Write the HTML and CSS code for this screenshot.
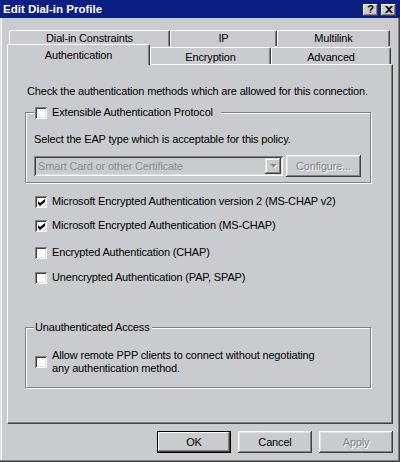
FILE: index.html
```html
<!DOCTYPE html>
<html>
<head>
<meta charset="utf-8">
<link rel="stylesheet" href="styles.css">
</head>
<body>
<div class="window">
  <div class="titlebar">
    <span class="title">Edit Dial-in Profile</span>
    <div class="caption-btns">
      <span class="cbtn help">?</span>
      <span class="cbtn close"><svg width="8" height="7" viewBox="0 0 8 7"><path d="M0 0h2l2 2 2-2h2L5 3.5 8 7H6L4 5 2 7H0l3-3.5z" fill="#000"/></svg></span>
    </div>
  </div>
  <div class="client">
    <div class="tabs">
      <div class="tabrow back">
        <div class="tab t-dial">Dial-in Constraints</div>
        <div class="tab t-ip">IP</div>
        <div class="tab t-multi">Multilink</div>
      </div>
      <div class="tabrow front">
        <div class="tab selected t-auth">Authentication</div>
        <div class="tab t-enc">Encryption</div>
        <div class="tab t-adv">Advanced</div>
      </div>
    </div>
    <div class="panel">
      <p class="intro">Check the authentication methods which are allowed for this connection.</p>
      <fieldset class="group eap">
        <legend class="eap-legend"><span class="check"><span class="box"></span><span>Extensible Authentication Protocol</span></span></legend>
        <p class="eap-text">Select the EAP type which is acceptable for this policy.</p>
        <div class="eap-row">
          <div class="combo"><span class="combo-text">Smart Card or other Certificate</span><span class="combo-btn"><svg width="9" height="6" viewBox="0 0 9 6"><path d="M2 2h7L5.5 5.5z" fill="#fff"/><path d="M1 1h7L4.5 4.5z" fill="#808080"/></svg></span></div>
          <button class="btn disabled configure">Configure...</button>
        </div>
      </fieldset>
      <div class="methods">
        <div class="check row"><span class="box"><svg class="tick" width="7" height="7" viewBox="0 0 7 7"><path d="M0 2L2 4L7 0V3L2 7L0 5Z" fill="#000"/></svg></span><span>Microsoft Encrypted Authentication version 2 (MS-CHAP v2)</span></div>
        <div class="check row"><span class="box"><svg class="tick" width="7" height="7" viewBox="0 0 7 7"><path d="M0 2L2 4L7 0V3L2 7L0 5Z" fill="#000"/></svg></span><span>Microsoft Encrypted Authentication (MS-CHAP)</span></div>
        <div class="check row row-chap"><span class="box"></span><span>Encrypted Authentication (CHAP)</span></div>
        <div class="check row row-pap"><span class="box"></span><span>Unencrypted Authentication (PAP, SPAP)</span></div>
      </div>
      <fieldset class="group unauth">
        <legend class="unauth-legend">Unauthenticated Access</legend>
        <div class="check unauth-row"><span class="box"></span><span>Allow remote PPP clients to connect without negotiating<br>any authentication method.</span></div>
      </fieldset>
    </div>
    <div class="footer">
      <button class="btn default">OK</button>
      <button class="btn">Cancel</button>
      <button class="btn disabled">Apply</button>
    </div>
  </div>
</div>
</body>
</html>
```

FILE: styles.css
```css
* { box-sizing: border-box; }
html, body { margin: 0; padding: 0; }
body {
  width: 400px;
  height: 462px;
  overflow: hidden;
  background: #c9cbce;
  font-family: "Liberation Sans", Arial, sans-serif;
  font-size: 11px;
  line-height: 13px;
  letter-spacing: -0.16px;
  color: #000;
}
.window {
  width: 400px;
  height: 462px;
  background: #c9cbce;
  box-shadow: inset -1px -1px #404040, inset -2px -2px #808080, inset 1px 0 #dfdfdf, inset 2px 0 #fff;
}
.titlebar {
  height: 18px;
  background: #0a1e84;
  display: flex;
  align-items: center;
  justify-content: space-between;
  padding: 0 4px 0 3px;
}
.title {
  color: #fff;
  font-weight: bold;
  font-size: 11.5px;
  letter-spacing: 0;
}
.caption-btns { display: flex; gap: 3px; margin-top: 1px; }
.cbtn {
  width: 15px;
  height: 12px;
  background: #c9cbce;
  box-shadow: inset -1px -1px #404040, inset 1px 1px #fff, inset -2px -2px #808080;
  display: flex;
  align-items: center;
  justify-content: center;
  font-weight: bold;
  font-size: 11px;
  line-height: 11px;
}
.client { padding: 12px 7px 0 7px; }

.tabrow { display: flex; }
.tabrow.back { height: 16px; margin-left: 2px; }
.tabrow.front { height: 18px; align-items: flex-end; }
.tab {
  display: flex;
  align-items: center;
  justify-content: center;
  background: #c9cbce;
  border-top: 1px solid #fff;
  border-left: 1px solid #fff;
  border-right: 1px solid #404040;
  box-shadow: inset -1px 0 #808080;
  border-radius: 2px 2px 0 0;
}
.back .tab { height: 16px; }
.t-dial { width: 161px; }
.t-ip { width: 107px; }
.t-multi { width: 113px; }
.front .tab { height: 17px; padding-top: 3px; }
.t-auth { width: 143px; }
.t-enc { width: 121px; }
.t-adv { width: 120px; }
.front .tab.selected {
  height: 21px;
  padding-top: 0;
  margin-bottom: -1px;
  position: relative;
  z-index: 1;
}

.panel {
  height: 360px;
  border-top: 1px solid #fff;
  border-left: 1px solid #fff;
  border-right: 1px solid #404040;
  border-bottom: 1px solid #404040;
  box-shadow: inset -1px -1px #808080;
  padding: 20px 0 0 17px;
}
.intro { margin: 0 0 0 2px; }

.group {
  margin: 0;
  width: 346px;
  min-width: 0;
  border: 1px solid #808080;
  box-shadow: inset 1px 1px #fff, 1px 1px #fff;
}
.eap { margin-top: 8px; padding: 14px 8px 5px 8px; }
.eap-legend { padding: 0 8px 0 1px; background: #c9cbce; }
.eap-text { margin: 0; }
.eap-row { display: flex; align-items: center; gap: 3px; margin-top: 9px; height: 22px; }

.check { display: flex; align-items: center; gap: 5px; }
.box {
  width: 12px;
  height: 12px;
  flex: none;
  background: #fff;
  box-shadow: inset 1px 1px #808080, inset -1px -1px #fff, inset 2px 2px #404040, inset -2px -2px #dfdfdf;
  display: flex;
  align-items: center;
  justify-content: center;
}
.tick { margin: 1px 0 0 1px; }

.combo {
  width: 249px;
  height: 20px;
  display: flex;
  align-items: center;
  justify-content: space-between;
  padding: 2px;
  background: #c9cbce;
  box-shadow: inset 1px 1px #808080, inset -1px -1px #fff, inset 2px 2px #404040, inset -2px -2px #dfdfdf;
}
.combo-text { color: #8a8c8e; padding-left: 2px; }
.combo-btn {
  width: 16px;
  height: 16px;
  display: flex;
  align-items: center;
  justify-content: center;
  background: #c9cbce;
  box-shadow: inset -1px -1px #404040, inset 1px 1px #dfdfdf, inset -2px -2px #808080, inset 2px 2px #fff;
}

.btn {
  border: none;
  padding: 0;
  background: #c9cbce;
  font: inherit;
  letter-spacing: inherit;
  color: #000;
  width: 74px;
  height: 22px;
  box-shadow: inset -1px -1px #404040, inset 1px 1px #fff, inset -2px -2px #808080, inset 2px 2px #dfdfdf;
}
.btn.configure { width: 75px; }
.btn.default {
  box-shadow: inset 0 0 0 1px #000, inset -2px -2px #404040, inset 2px 2px #fff, inset -3px -3px #808080;
}
.btn.disabled { color: #808080; text-shadow: 1px 1px #fff; }

.methods {
  display: flex;
  flex-direction: column;
  gap: 11px;
  margin: 12px 0 0 10px;
}
.row-chap { margin-top: 3px; }
.row-pap { margin-top: 1px; }

.unauth { margin-top: 37px; padding: 15px 8px 12px 8px; }
.unauth-legend { padding: 0 2px 0 1px; background: #c9cbce; }
.unauth-row { margin-left: 1px; }

.footer {
  display: flex;
  justify-content: flex-end;
  gap: 7px;
  margin-top: 7px;
}
```
